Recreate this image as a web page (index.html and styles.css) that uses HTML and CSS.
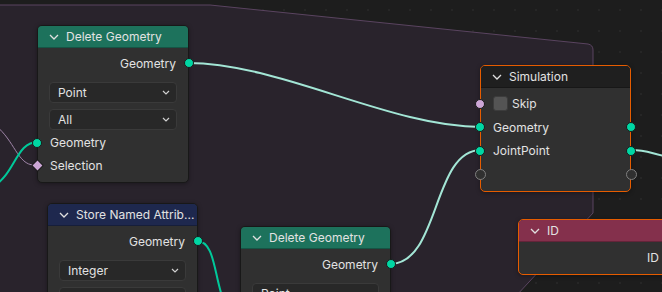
FILE: index.html
```html
<!DOCTYPE html>
<html lang="en">
<head>
    <meta charset="UTF-8">
    <title>Geometry Nodes</title>
    <link rel="stylesheet" href="styles.css">
</head>
<body>
    <div class="editor">
        <!-- backdrop: grid, simulation zone and links -->
        <svg class="backdrop" width="662" height="292" viewBox="0 0 662 292">
            <defs>
                <pattern id="dots" width="21" height="21" patternUnits="userSpaceOnUse" x="10" y="0">
                    <rect x="0" y="9" width="2" height="2" fill="#262626"/>
                </pattern>
            </defs>
            <rect width="662" height="292" fill="#1d1d1d"/>
            <rect width="662" height="292" fill="url(#dots)"/>
            <path class="zone" d="M-2,5 L210,5 L588,44 Q593,45 593,50 L593,213 L516,296 L-2,296 Z"/>

            <path class="link thin" d="M-4,126 C14,140 18,165 34,165"/>
            <path class="link teal" d="M-6,186 C16,172 16,142 38,142"/>
            <path class="link teal" d="M197,241 C214,241 214,272 222,296"/>
            <path class="link pale" d="M188,63 C280,63 390,127 481,127"/>
            <path class="link pale" d="M390,264 C440,264 432,150 481,150"/>
            <path class="link pale" d="M631,150 C646,150 650,153 664,156"/>
        </svg>

        <!-- Delete Geometry -->
        <div class="node n-del-a">
            <div class="header green">
                <svg class="chev" width="10" height="6" viewBox="0 0 10 6"><polyline points="1,1 5,5 9,1"/></svg>
                <span>Delete Geometry</span>
            </div>
            <div class="body">
                <div class="row out">Geometry<i class="sock geo right"></i></div>
                <div class="select first"><span>Point</span><svg class="dd" width="8" height="5" viewBox="0 0 8 5"><polyline points="1,1 4,4 7,1"/></svg></div>
                <div class="select"><span>All</span><svg class="dd" width="8" height="5" viewBox="0 0 8 5"><polyline points="1,1 4,4 7,1"/></svg></div>
                <div class="row in"><i class="sock geo left"></i>Geometry</div>
                <div class="row in"><i class="sock diamond left"></i>Selection</div>
            </div>
        </div>

        <!-- Store Named Attribute -->
        <div class="node n-store">
            <div class="header navy">
                <svg class="chev" width="10" height="6" viewBox="0 0 10 6"><polyline points="1,1 5,5 9,1"/></svg>
                <span>Store Named Attrib...</span>
            </div>
            <div class="body">
                <div class="row out">Geometry<i class="sock geo right"></i></div>
                <div class="select first"><span>Integer</span><svg class="dd" width="8" height="5" viewBox="0 0 8 5"><polyline points="1,1 4,4 7,1"/></svg></div>
                <div class="select"><span></span></div>
            </div>
        </div>

        <!-- Delete Geometry (second) -->
        <div class="node n-del-b">
            <div class="header green">
                <svg class="chev" width="10" height="6" viewBox="0 0 10 6"><polyline points="1,1 5,5 9,1"/></svg>
                <span>Delete Geometry</span>
            </div>
            <div class="body">
                <div class="row out">Geometry<i class="sock geo right"></i></div>
                <div class="select first"><span>Point</span></div>
            </div>
        </div>

        <!-- Simulation output -->
        <div class="node selected n-sim">
            <div class="header dark">
                <svg class="chev" width="10" height="6" viewBox="0 0 10 6"><polyline points="1,1 5,5 9,1"/></svg>
                <span>Simulation</span>
            </div>
            <div class="body">
                <div class="row in"><i class="sock bool left"></i><b class="check"></b>Skip</div>
                <div class="row in"><i class="sock geo left"></i>Geometry<i class="sock geo right"></i></div>
                <div class="row in"><i class="sock geo left"></i>JointPoint<i class="sock geo right"></i></div>
                <div class="row in"><i class="sock empty left"></i><i class="sock empty right"></i></div>
            </div>
        </div>

        <!-- ID -->
        <div class="node selected n-id">
            <div class="header wine">
                <svg class="chev" width="10" height="6" viewBox="0 0 10 6"><polyline points="1,1 5,5 9,1"/></svg>
                <span>ID</span>
            </div>
            <div class="body">
                <div class="row out id-out">ID</div>
            </div>
        </div>
    </div>
</body>
</html>
```

FILE: styles.css
```css
body {
    margin: 0;
    background-color: #1d1d1d;
    font-family: Inter, "Noto Sans", sans-serif;
    font-size: 12px;
    color: #e2e2e2;
}
.editor {
    position: relative;
    width: 662px;
    height: 292px;
    overflow: hidden;
}
.backdrop {
    position: absolute;
    left: 0;
    top: 0;
}
.zone {
    fill: #29232c;
    stroke: #5a4460;
    stroke-width: 1;
}
.link {
    fill: none;
    stroke-width: 2;
}
.link.teal {
    stroke: #00c99a;
}
.link.pale {
    stroke: #a3e6d6;
}
.link.thin {
    stroke: #9f85a8;
    stroke-width: 1;
}

/* nodes */
.node {
    position: absolute;
    background-color: #303030;
    border: 1px solid #181818;
    border-radius: 5px;
    box-shadow: 0 1px 4px rgba(0,0,0,0.35);
}
.node.selected {
    border: 1.5px solid #e65c00;
}
.n-del-a {
    left: 37px;
    top: 25px;
    width: 150px;
    height: 156px;
}
.n-store {
    left: 47px;
    top: 203px;
    width: 149px;
    height: 110px;
}
.n-del-b {
    left: 240px;
    top: 226px;
    width: 149px;
    height: 90px;
}
.n-sim {
    left: 480px;
    top: 65px;
    width: 149px;
    height: 125px;
}
.n-id {
    left: 518px;
    top: 219px;
    width: 160px;
    height: 54px;
}
.header {
    display: flex;
    align-items: center;
    gap: 7px;
    height: 21px;
    padding: 0 3px 0 11px;
    border-radius: 4px 4px 0 0;
    border-bottom: 1px solid rgba(0,0,0,0.25);
    white-space: nowrap;
    overflow: hidden;
}
.header.green { background-color: #1d725c; }
.header.navy { background-color: #1e284e; }
.header.wine { background-color: #84304c; }
.header.dark { background-color: #1f1f1f; }
.chev {
    flex-shrink: 0;
    fill: none;
    stroke: #e0e0e0;
    stroke-width: 1.3;
}
.body {
    padding: 4px 0 6px;
}
.row {
    position: relative;
    display: flex;
    align-items: center;
    height: 23px;
    padding: 0 12px;
}
.row.out {
    justify-content: flex-end;
    height: 22px;
}
.row.id-out {
    padding-right: 20px;
}
.n-sim .body {
    padding-top: 4px;
}
.n-sim .row {
    height: 23.5px;
}
.select {
    display: flex;
    align-items: center;
    justify-content: space-between;
    height: 19px;
    margin: 6px 11px 0;
    padding: 0 6px 0 8px;
    background-color: #282828;
    border: 1px solid #3a3a3a;
    border-radius: 4px;
}
.select.first {
    margin-top: 8px;
}
.select + .row {
    margin-top: 1px;
}
.dd {
    fill: none;
    stroke: #d0d0d0;
    stroke-width: 1.2;
}
.check {
    width: 15px;
    height: 15px;
    margin-right: 4px;
    background-color: #545454;
    border: 1px solid #3c3c3c;
    border-radius: 3px;
    box-sizing: border-box;
}

/* sockets */
.sock {
    position: absolute;
    top: 50%;
    width: 10px;
    height: 10px;
    margin-top: -5px;
    border-radius: 50%;
    box-sizing: border-box;
    border: 1px solid #1a1a1a;
}
.sock.left { left: -6px; }
.sock.right { right: -6px; }
.sock.geo { background-color: #00d6a3; }
.sock.bool { background-color: #cca6d6; }
.sock.diamond {
    background-color: #cca6d6;
    border-radius: 1px;
    transform: rotate(45deg);
    width: 9px;
    height: 9px;
    margin-top: -4.5px;
    left: -5.5px;
}
.sock.empty {
    background-color: #303030;
    border: 1.5px solid #808080;
    width: 11px;
    height: 11px;
    margin-top: -5.5px;
}
.sock.empty.left { left: -6.5px; }
.sock.empty.right { right: -6.5px; }
```
